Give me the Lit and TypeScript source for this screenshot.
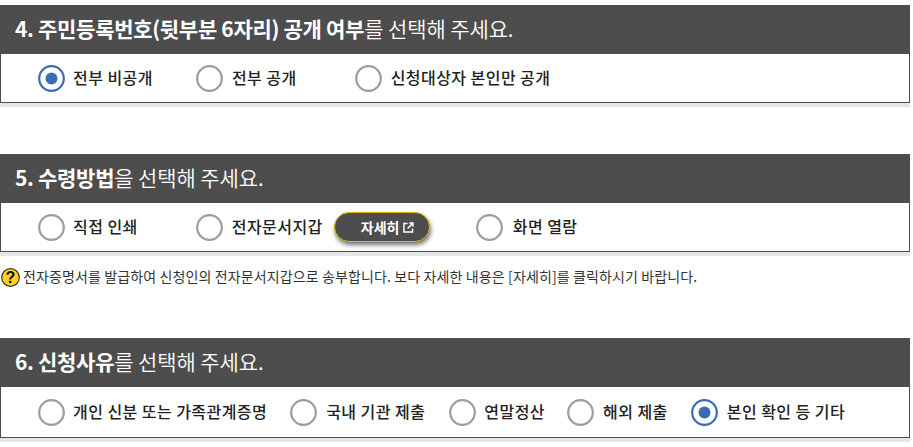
import { LitElement, html, css, svg } from "lit";
import { customElement } from "lit/decorators.js";

interface Opt { label: string; on?: boolean; gap: number; labelGap?: number; }

@customElement("app-root")
export class AppRoot extends LitElement {
  static styles = css`
    :host { display: block; width: 913px; height: 447px; overflow: hidden; background: #fff;
      font-family: "Noto Sans CJK KR", "Noto Sans", sans-serif; color: #222; }
    .page { width: 910px; padding-top: 5px; display: flex; flex-direction: column; }
    .sec { box-shadow: 0 4px 0 #e6e6e6; }
    .s5 { margin-top: 51px; }
    .s6 { margin-top: 36px; }
    .head { height: 49px; box-sizing: border-box; padding: 0 0 3px 15px; background: #4d4d4d; color: #fff; display: flex; align-items: center;
      font-size: 21px; font-weight: 350; letter-spacing: -0.1px; white-space: pre; }
    .head b { font-weight: 700; letter-spacing: -0.3px; }
    .body { height: 49px; box-sizing: border-box; border: 1px solid #4d4d4d; border-top: 0; display: flex; align-items: center; padding-left: 37px;
      font-size: 16px; font-weight: 500; letter-spacing: 0.45px; white-space: pre; }
    .tall { height: 51px; }
    .opt { display: flex; align-items: center; }
    .opt span { padding-bottom: 2px; }
    .radio { width: 27px; height: 27px; flex: none; display: block; }
    .btn { margin-left: 11px; height: 30px; width: 96px; box-sizing: border-box; border: 1px solid #e6b400; border-radius: 15px; background: #4d4d4d;
      color: #fff; font-size: 14px; font-weight: 700; display: flex; align-items: center; gap: 4px; padding-left: 26px;
      box-shadow: 1px 3px 4px rgba(0,0,0,.55); letter-spacing: 0; }
    .btn span { padding-bottom: 1px; }
    .note { height: 50px; display: flex; align-items: center; gap: 3px; font-size: 14px; font-weight: 400; letter-spacing: 0.12px; color: #333; white-space: pre; }
    .note span { padding-bottom: 2px; }
    .q { width: 19px; height: 19px; flex: none; display: block; margin-left: 1px; }
  `;

  private radio(on?: boolean) {
    return html`<svg class="radio" viewBox="0 0 27 27">
      <circle cx="13.5" cy="13.5" r="12.3" fill="#fff" stroke=${on ? "#3a6cb5" : "#9c9c9c"} stroke-width="2.2"></circle>
      ${on ? svg`<circle cx="13.5" cy="13.5" r="6" fill="#3a6cb5"></circle>` : ""}
    </svg>`;
  }

  private opt(o: Opt) {
    return html`<div class="opt" style="margin-right:${o.gap}px;gap:${o.labelGap ?? 9}px">${this.radio(o.on)}<span>${o.label}</span></div>`;
  }

  render() {
    return html`<div class="page">
      <section class="sec">
        <div class="head"><b>4. 주민등록번호(뒷부분 6자리) 공개 여부</b>를 선택해 주세요.</div>
        <div class="body">
          ${this.opt({ label: "전부 비공개", on: true, gap: 43, labelGap: 8 })}
          ${this.opt({ label: "전부 공개", gap: 58 })}
          ${this.opt({ label: "신청대상자 본인만 공개", gap: 0 })}
        </div>
      </section>
      <section class="sec s5">
        <div class="head"><b>5. 수령방법</b>을 선택해 주세요.</div>
        <div class="body">
          ${this.opt({ label: "직접 인쇄", gap: 58, labelGap: 8 })}
          ${this.opt({ label: "전자문서지갑", gap: 0 })}
          <div class="btn" style="margin-right:46px"><span>자세히</span>
            <svg width="11" height="11" viewBox="0 0 12 12" fill="none" stroke="#fff" stroke-width="1.6">
              <path d="M5 1.6H1V11H10.4V7"></path><path d="M5 7L10.5 1.5M6.8 1.2H10.8V5.2"></path>
            </svg>
          </div>
          ${this.opt({ label: "화면 열람", gap: 0, labelGap: 10 })}
        </div>
      </section>
      <div class="note">
        <svg class="q" viewBox="0 0 19 19"><circle cx="9.5" cy="9.5" r="8.8" fill="#ffd21f" stroke="#333" stroke-width="1.2"></circle>
          <text x="9.5" y="15" text-anchor="middle" font-size="16" font-weight="700" fill="#111" font-family="Liberation Sans">?</text></svg>
        <span>전자증명서를 발급하여 신청인의 전자문서지갑으로 송부합니다. 보다 자세한 내용은 [자세히]를 클릭하시기 바랍니다.</span>
      </div>
      <section class="sec s6">
        <div class="head"><b>6. 신청사유</b>를 선택해 주세요.</div>
        <div class="body tall">
          ${this.opt({ label: "개인 신분 또는 가족관계증명", gap: 23, labelGap: 8 })}
          ${this.opt({ label: "국내 기관 제출", gap: 24 })}
          ${this.opt({ label: "연말정산", gap: 22, labelGap: 8 })}
          ${this.opt({ label: "해외 제출", gap: 23 })}
          ${this.opt({ label: "본인 확인 등 기타", on: true, gap: 0 })}
        </div>
      </section>
    </div>`;
  }
}
